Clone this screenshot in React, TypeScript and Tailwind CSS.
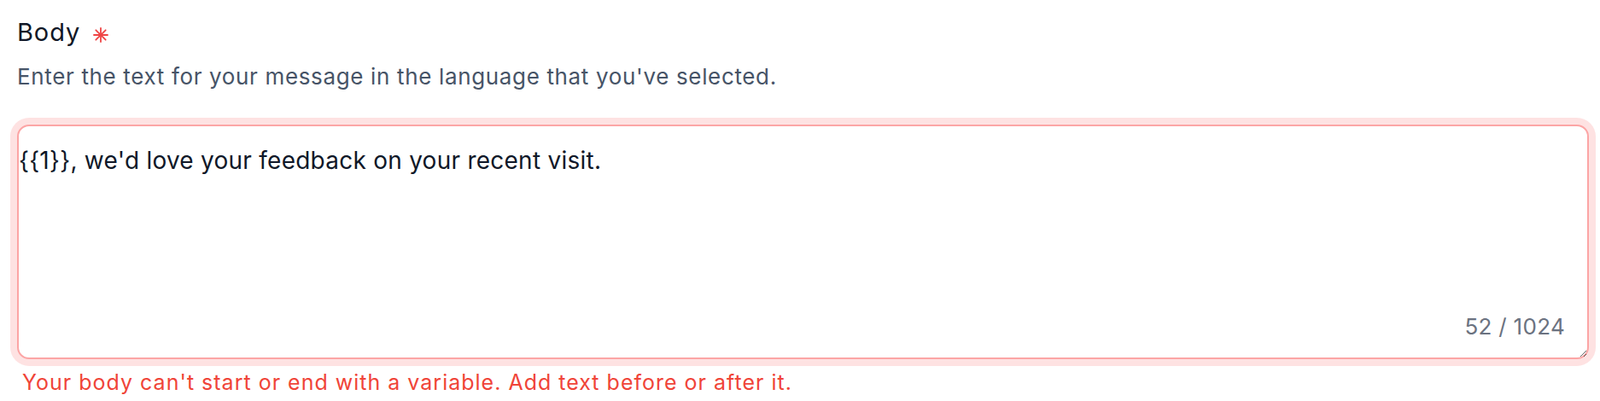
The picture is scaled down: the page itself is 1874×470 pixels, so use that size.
import React, { useState } from 'react';

const MAX = 1024;

const RequiredMark = () => (
  <svg width="18" height="18" viewBox="0 0 18 18" className="ml-[15px] mt-[6px] text-[#ef4444]" stroke="currentColor" strokeWidth="1.8" strokeLinecap="round">
    <line x1="9" y1="1" x2="9" y2="17" />
    <line x1="1" y1="9" x2="17" y2="9" />
    <line x1="3.3" y1="3.3" x2="14.7" y2="14.7" />
    <line x1="14.7" y1="3.3" x2="3.3" y2="14.7" />
  </svg>
);

export default function App() {
  const [body, setBody] = useState("{{1}}, we'd love your feedback on your recent visit.");

  return (
    <div className="min-h-screen bg-white pl-5 pr-[13px] pt-5 font-['Inter','Noto_Sans',sans-serif]">
      {/* label */}
      <div className="flex items-center">
        <label htmlFor="body" className="text-[29px] leading-[36px] tracking-[0.9px] text-[#111827]">
          Body
        </label>
        <RequiredMark />
      </div>
      <p className="mt-4 text-[26px] leading-[36px] tracking-[0.65px] text-[#475467]">
        Enter the text for your message in the language that you've selected.
      </p>

      {/* textarea with error ring */}
      <div className="relative mt-[38px]">
        <textarea
          id="body"
          value={body}
          maxLength={MAX}
          onChange={e => setBody(e.target.value)}
          className="block h-[275px] w-full rounded-[14px] border-2 border-[#fca5a5] bg-white pl-0 pr-6 pt-5 text-[28px] leading-[40px] tracking-[0.25px] text-[#101828] shadow-[0_0_0_8px_#fee2e2] outline-none"
        />
        <span className="pointer-events-none absolute bottom-[20px] right-[28px] text-[26px] leading-[36px] tracking-[0.3px] text-[#6b7280]">
          {body.length} / {MAX}
        </span>
      </div>

      <p className="mt-[10px] pl-[6px] text-[25px] leading-[34px] tracking-[1px] text-[#f04438]">
        Your body can't start or end with a variable. Add text before or after it.
      </p>
    </div>
  );
}
